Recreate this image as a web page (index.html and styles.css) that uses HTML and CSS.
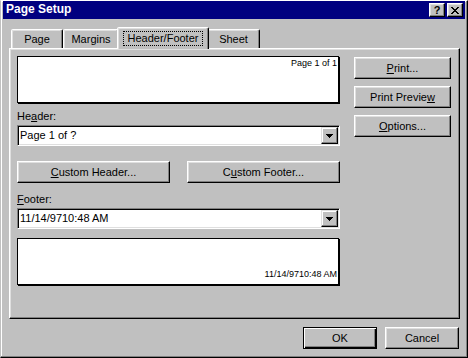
FILE: index.html
```html
<!DOCTYPE html>
<html>
<head>
<meta charset="utf-8">
<title>Page Setup</title>
<link rel="stylesheet" href="styles.css">
</head>
<body>
<div class="window">
  <div class="titlebar">
    <span class="title">Page Setup</span>
    <div class="caption-btns">
      <div class="cap-btn help">?</div>
      <div class="cap-btn close">
        <svg width="8" height="7" viewBox="0 0 8 7" shape-rendering="crispEdges"><path fill="#000" d="M0 0h2v1H0zM6 0h2v1H6zM1 1h2v1H1zM5 1h2v1H5zM2 2h4v1H2zM3 3h2v1H3zM2 4h4v1H2zM1 5h2v1H1zM5 5h2v1H5zM0 6h2v1H0zM6 6h2v1H6z"/></svg>
      </div>
    </div>
  </div>
  <div class="body">
    <div class="tabstrip">
      <div class="tab t-page">Page</div>
      <div class="tab t-margins">Margins</div>
      <div class="tab t-hf selected"><span class="focus">Header/Footer</span></div>
      <div class="tab t-sheet">Sheet</div>
    </div>
    <div class="panel">
      <div class="left">
        <div class="preview header-preview"><span>Page 1 of 1</span></div>
        <div class="label">He<u>a</u>der:</div>
        <div class="combo">
          <span class="combo-text">Page 1 of ?</span>
          <span class="combo-btn"><svg width="7" height="4" viewBox="0 0 7 4" shape-rendering="crispEdges"><path fill="#000" d="M0 0h7v1H0zM1 1h5v1H1zM2 2h3v1H2zM3 3h1v1H3z"/></svg></span>
        </div>
        <div class="custom-row">
          <div class="btn custom"><u>C</u>ustom Header...</div>
          <div class="btn custom">C<u>u</u>stom Footer...</div>
        </div>
        <div class="label footer-label"><u>F</u>ooter:</div>
        <div class="combo">
          <span class="combo-text">11/14/9710:48 AM</span>
          <span class="combo-btn"><svg width="7" height="4" viewBox="0 0 7 4" shape-rendering="crispEdges"><path fill="#000" d="M0 0h7v1H0zM1 1h5v1H1zM2 2h3v1H2zM3 3h1v1H3z"/></svg></span>
        </div>
        <div class="preview footer-preview"><span>11/14/9710:48 AM</span></div>
      </div>
      <div class="right">
        <div class="btn side"><u>P</u>rint...</div>
        <div class="btn side">Print Previe<u>w</u></div>
        <div class="btn side"><u>O</u>ptions...</div>
      </div>
    </div>
    <div class="actions">
      <div class="btn action default">OK</div>
      <div class="btn action">Cancel</div>
    </div>
  </div>
</div>
</body>
</html>
```

FILE: styles.css
```css
* { box-sizing: border-box; }

html, body {
  margin: 0;
  padding: 0;
}

body {
  width: 468px;
  height: 358px;
  overflow: hidden;
  background: #c0c0c0;
  font-family: "Liberation Sans", Arial, sans-serif;
  font-size: 11px;
  color: #000;
}

u { text-decoration: underline; text-underline-offset: 1px; }

.window {
  width: 468px;
  height: 358px;
  display: flex;
  flex-direction: column;
  background: #c0c0c0;
  border-style: solid;
  border-width: 1px;
  border-color: #ffffff #000000 #000000 #c0c0c0;
  box-shadow: inset -1px -1px #808080, inset 1px 1px #ffffff;
  padding: 0 2px 2px 2px;
}

/* title bar */
.titlebar {
  height: 18px;
  flex: none;
  background: #000080;
  display: flex;
  align-items: flex-start;
  justify-content: space-between;
  padding: 0 2px 0 3px;
}

.title {
  color: #fff;
  font-weight: bold;
  font-size: 12px;
  line-height: 16px;
}

.caption-btns {
  display: flex;
  gap: 2px;
  margin-top: 2px;
}

.cap-btn {
  width: 16px;
  height: 14px;
  background: #c0c0c0;
  border: 1px solid;
  border-color: #ffffff #000000 #000000 #ffffff;
  box-shadow: inset -1px -1px #808080, inset 1px 1px #dfdfdf;
  display: flex;
  align-items: center;
  justify-content: center;
}

.cap-btn.help {
  font-weight: bold;
  font-size: 11px;
  line-height: 12px;
}

/* body */
.body {
  flex: 1;
  display: flex;
  flex-direction: column;
  padding: 8px 5px 6px 6px;
}

/* tabs */
.tabstrip {
  flex: none;
  display: flex;
  align-items: flex-end;
  height: 21px;
  padding-left: 2px;
}

.tab {
  height: 19px;
  background: #c0c0c0;
  border: 1px solid;
  border-bottom: none;
  border-color: #ffffff #000000 transparent #ffffff;
  border-radius: 2px 2px 0 0;
  box-shadow: inset -1px 0 #808080, inset 1px 1px #dfdfdf;
  display: flex;
  justify-content: center;
  align-items: flex-start;
  padding-top: 3px;
  line-height: 13px;
}

.t-page { width: 52px; }
.t-margins { width: 56px; }
.t-hf { width: 88px; }
.t-sheet { width: 53px; }

.tab.selected {
  position: relative;
  z-index: 1;
  height: 22px;
  margin: 0 -2px -1px -2px;
  width: 92px;
  padding-top: 3px;
  box-shadow: inset -1px 0 #808080, inset 1px 1px #dfdfdf;
}

.focus {
  display: inline-block;
  border: 1px dotted #000;
  padding: 0 4px;
  line-height: 13px;
}

/* panel */
.panel {
  flex: 1;
  display: flex;
  gap: 14px;
  background: #c0c0c0;
  border: 1px solid;
  border-color: #ffffff #000000 #000000 #ffffff;
  box-shadow: inset -1px -1px #808080, inset 1px 1px #dfdfdf;
  padding: 7px 0 0 7px;
}

.left {
  width: 323px;
  display: flex;
  flex-direction: column;
}

.preview {
  width: 322px;
  height: 47px;
  flex: none;
  background: #fff;
  border: 1px solid #000;
  box-shadow: 1px 1px #000;
  display: flex;
  justify-content: flex-end;
  font-size: 9px;
  line-height: 11px;
}

.header-preview {
  align-items: flex-start;
  padding: 1px 1px 0 0;
}

.footer-preview {
  align-items: flex-end;
  padding: 0 1px 4px 0;
  margin-top: 9px;
}

.label {
  line-height: 13px;
  margin-top: 7px;
  margin-bottom: 2px;
}

.footer-label { margin-top: 10px; }

.combo {
  width: 323px;
  height: 21px;
  flex: none;
  display: flex;
  background: #fff;
  border: 1px solid;
  border-color: #808080 #ffffff #ffffff #808080;
  box-shadow: inset 1px 1px #000, inset -1px -1px #dfdfdf;
  padding: 1px;
}

.combo-text {
  flex: 1;
  line-height: 17px;
  padding-left: 1px;
}

.combo-btn {
  width: 17px;
  height: 17px;
  background: #c0c0c0;
  border: 1px solid;
  border-color: #dfdfdf #000000 #000000 #dfdfdf;
  box-shadow: inset -1px -1px #808080, inset 1px 1px #ffffff;
  display: flex;
  align-items: center;
  justify-content: center;
}

.combo-btn svg { display: block; }

/* buttons */
.btn {
  height: 22px;
  background: #c0c0c0;
  border: 1px solid;
  border-color: #ffffff #000000 #000000 #ffffff;
  box-shadow: inset -1px -1px #808080, inset 1px 1px #dfdfdf;
  text-align: center;
  padding-top: 1px;
  line-height: 19px;
}

.custom-row {
  display: flex;
  gap: 17px;
  margin-top: 15px;
}

.custom { width: 153px; }

.right {
  width: 97px;
  display: flex;
  flex-direction: column;
  gap: 7px;
  padding-top: 1px;
}

.actions {
  flex: none;
  display: flex;
  justify-content: flex-end;
  gap: 8px;
  margin-top: 8px;
  padding-right: 1px;
}

.action { width: 74px; }

.btn.default {
  border-color: #000;
  box-shadow: inset 1px 1px #ffffff, inset -1px -1px #000000, inset -2px -2px #808080;
}
```
